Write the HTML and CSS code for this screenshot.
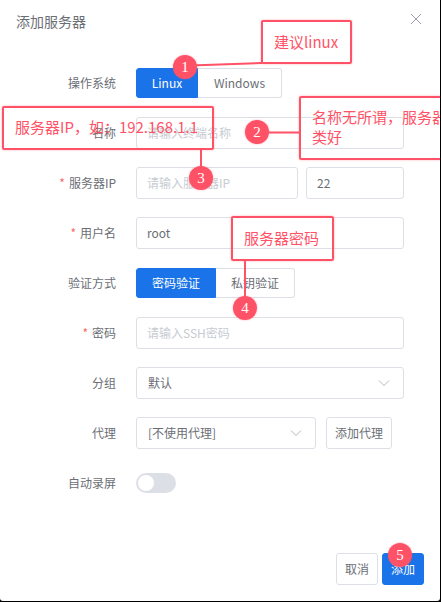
FILE: index.html
```html
<!DOCTYPE html>
<html lang="zh-CN">
<head>
    <meta charset="UTF-8">
    <meta name="viewport" content="width=device-width, initial-scale=1.0">
    <title>添加服务器</title>
    <link rel="stylesheet" href="styles.css">
</head>
<body>

    <div class="dialog">
        <div class="dialog-header">
            <span class="dialog-title">添加服务器</span>
            <svg class="close-icon" width="12" height="12" viewBox="0 0 12 12">
                <path d="M1 1L11 11M11 1L1 11" stroke="#9a9ea8" stroke-width="1" fill="none"/>
            </svg>
        </div>

        <form class="form">
            <div class="form-row">
                <label class="form-label">操作系统</label>
                <div class="radio-group">
                    <span class="radio-item active os-linux">Linux</span>
                    <span class="radio-item os-windows">Windows</span>
                </div>
            </div>
            <div class="form-row">
                <label class="form-label">名称</label>
                <div class="input grow placeholder">请输入终端名称</div>
            </div>
            <div class="form-row">
                <label class="form-label"><i>*</i>服务器IP</label>
                <div class="input input-host placeholder">请输入服务器IP</div>
                <div class="input input-port">22</div>
            </div>
            <div class="form-row">
                <label class="form-label"><i>*</i>用户名</label>
                <div class="input grow">root</div>
            </div>
            <div class="form-row">
                <label class="form-label">验证方式</label>
                <div class="radio-group">
                    <span class="radio-item active auth-item">密码验证</span>
                    <span class="radio-item auth-item">私钥验证</span>
                </div>
            </div>
            <div class="form-row">
                <label class="form-label"><i>*</i>密码</label>
                <div class="input grow placeholder">请输入SSH密码</div>
            </div>
            <div class="form-row">
                <label class="form-label">分组</label>
                <div class="input select grow">
                    <span>默认</span>
                    <svg class="arrow" width="12" height="8" viewBox="0 0 12 8"><path d="M1 1.5L6 6.5L11 1.5" stroke="#b4b8c0" fill="none"/></svg>
                </div>
            </div>
            <div class="form-row">
                <label class="form-label">代理</label>
                <div class="input select input-proxy">
                    <span>[不使用代理]</span>
                    <svg class="arrow" width="12" height="8" viewBox="0 0 12 8"><path d="M1 1.5L6 6.5L11 1.5" stroke="#b4b8c0" fill="none"/></svg>
                </div>
                <button type="button" class="btn btn-proxy">添加代理</button>
            </div>
            <div class="form-row">
                <label class="form-label">自动录屏</label>
                <span class="switch"><span class="switch-knob"></span></span>
            </div>
        </form>

        <div class="dialog-footer">
            <button type="button" class="btn">取消</button>
            <button type="button" class="btn btn-primary">添加</button>
        </div>

        <!-- tutorial annotations drawn on top of the dialog -->
        <svg class="note-lines" width="440" height="601" viewBox="0 0 440 601">
            <path d="M190 65.5L262 63M262 132.5H300M201 149V170M245 260V300" stroke="#ff5266" stroke-width="2" fill="none"/>
        </svg>
        <div class="note-box note-box-1">建议linux</div>
        <div class="note-box note-box-2">名称无所谓，服务器分类好</div>
        <div class="note-box note-box-3">服务器IP，如：192.168.1.1</div>
        <div class="note-box note-box-4">服务器密码</div>
        <span class="note-dot note-dot-1">1</span>
        <span class="note-dot note-dot-2">2</span>
        <span class="note-dot note-dot-3">3</span>
        <span class="note-dot note-dot-4">4</span>
        <span class="note-dot note-dot-5">5</span>
    </div>

</body>
</html>
```

FILE: styles.css
```css
* {
    box-sizing: border-box;
}

body {
    margin: 0;
    background-color: #000;
    font-family: "Noto Sans CJK SC", "Noto Sans", sans-serif;
    font-size: 12px;
    color: #6b6e75;
}

.dialog {
    position: relative;
    display: flex;
    flex-direction: column;
    width: 440px;
    height: 601px;
    overflow: hidden;
    background-color: #fff;
    border-radius: 0 0 3px 3px;
}

.dialog-header {
    display: flex;
    justify-content: space-between;
    align-items: center;
    height: 67px;
    padding: 0 18px 23px 16px;
}

.dialog-title {
    margin-bottom: 2px;
    font-size: 14px;
}

.close-icon {
    margin-bottom: 6px;
}

.form {
    display: flex;
    flex-direction: column;
    gap: 18px;
    padding-right: 36px;
}

.form-row {
    display: flex;
    align-items: center;
    height: 32px;
}

.form-label {
    width: 116px;
    margin-right: 20px;
    margin-bottom: 2px;
    text-align: right;
}

.form-label i {
    margin-right: 4px;
    font-style: normal;
    color: #f56c6c;
}

.radio-group {
    display: flex;
    height: 30px;
}

.radio-item {
    display: flex;
    justify-content: center;
    align-items: center;
    padding-bottom: 2px;
    border: 1px solid #dcdfe6;
    border-left: none;
}

.radio-item:first-child {
    border-left: 1px solid #dcdfe6;
    border-radius: 3px 0 0 3px;
}

.radio-item:last-child {
    border-radius: 0 3px 3px 0;
}

.radio-item.active {
    background-color: #1a73e8;
    border-color: #1a73e8;
    color: #fff;
}

.os-linux {
    width: 62px;
}

.os-windows {
    width: 84px;
}

.auth-item {
    width: 80px;
}

.auth-item:last-child {
    width: 79px;
}

.input {
    display: flex;
    align-items: center;
    height: 32px;
    padding: 0 10px 2px;
    background-color: #fff;
    border: 1px solid #dcdfe6;
    border-radius: 3px;
}

.grow {
    flex: 1;
}

.placeholder {
    color: #c8cbd2;
}

.input-host {
    width: 162px;
    margin-right: 8px;
}

.input-port {
    width: 98px;
}

.select {
    justify-content: space-between;
    padding: 0 13px 0 11px;
}

.select span {
    margin-bottom: 2px;
}

.input-proxy {
    width: 180px;
    margin-right: 10px;
}

.btn {
    height: 32px;
    padding: 0 8px 2px;
    background-color: #fff;
    border: 1px solid #dcdfe6;
    border-radius: 3px;
    font-family: inherit;
    font-size: 12px;
    color: #6b6e75;
}

.btn-proxy {
    width: 66px;
}

.btn-primary {
    background-color: #1a73e8;
    border-color: #1a73e8;
    color: #fff;
}

.switch {
    display: flex;
    align-items: center;
    width: 40px;
    height: 20px;
    padding: 2px;
    background-color: #dcdfe6;
    border-radius: 10px;
}

.switch-knob {
    width: 16px;
    height: 16px;
    background-color: #fff;
    border-radius: 50%;
}

.dialog-footer {
    display: flex;
    justify-content: flex-end;
    gap: 4px;
    margin-top: auto;
    padding: 0 16px 16px;
}

.dialog-footer .btn {
    width: 42px;
}

/* annotations */
.note-lines {
    position: absolute;
    top: 0;
    left: 0;
}

.note-box {
    position: absolute;
    border: 2px solid #ff5266;
    border-radius: 2px;
    box-shadow: 0 0 2px rgba(255, 82, 102, 0.5);
    font-size: 15px;
    line-height: 18px;
    color: #ff5266;
}

.note-box-1 {
    top: 20px;
    left: 261px;
    width: 91px;
    height: 44px;
    padding: 11px;
    white-space: nowrap;
}

.note-box-2 {
    top: 96px;
    left: 299px;
    width: 180px;
    height: 64px;
    padding: 9px 11px;
    line-height: 20px;
}

.note-box-3 {
    top: 106px;
    left: 2px;
    width: 212px;
    height: 44px;
    padding: 10px 11px;
    white-space: nowrap;
}

.note-box-4 {
    top: 216px;
    left: 231px;
    width: 103px;
    height: 45px;
    padding: 11px;
    white-space: nowrap;
}

.note-dot {
    position: absolute;
    display: flex;
    justify-content: center;
    align-items: center;
    width: 24px;
    height: 24px;
    background-color: #ff5266;
    border-radius: 50%;
    box-shadow: 0 0 2px rgba(255, 82, 102, 0.5);
    font-family: "Liberation Serif", serif;
    font-size: 15px;
    color: #fff;
}

.note-dot-1 {
    top: 55px;
    left: 173px;
}

.note-dot-2 {
    top: 120px;
    left: 245px;
}

.note-dot-3 {
    top: 166px;
    left: 189px;
}

.note-dot-4 {
    top: 296px;
    left: 233px;
}

.note-dot-5 {
    top: 543px;
    left: 388px;
}
```
